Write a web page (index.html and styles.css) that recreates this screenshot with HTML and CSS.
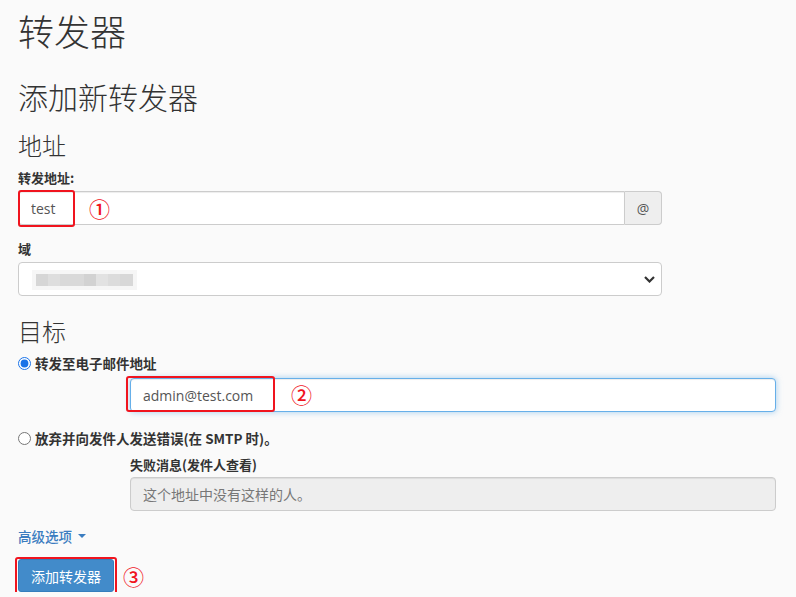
FILE: index.html
```html
<!DOCTYPE html>
<html lang="zh-CN">
<head>
<meta charset="utf-8">
<title>转发器</title>
<link rel="stylesheet" href="styles.css">
</head>
<body>
<main class="page">
  <h1 class="page-title">转发器</h1>
  <h2 class="section-title">添加新转发器</h2>

  <h3 class="group-title">地址</h3>
  <div class="field">
    <label class="field-label" for="fwd">转发地址:</label>
    <div class="input-group">
      <div class="input-wrap">
        <input id="fwd" class="text-input group-input" type="text" value="test">
        <span class="mark mark-1"></span>
        <span class="callout callout-1">①</span>
      </div>
      <span class="addon">@</span>
    </div>
  </div>

  <div class="field">
    <label class="field-label">域</label>
    <div class="select-box">
      <span class="redacted"></span>
      <svg class="chevron" width="11" height="7" viewBox="0 0 11 7"><path d="M1 1 L5.5 5.5 L10 1" fill="none" stroke="#333" stroke-width="2.2"/></svg>
    </div>
  </div>

  <h3 class="group-title target-title">目标</h3>
  <div class="radio-row">
    <input class="radio" type="radio" name="dest" id="r1" checked>
    <label class="radio-label" for="r1">转发至电子邮件地址</label>
  </div>
  <div class="indent">
    <div class="input-wrap">
      <input class="text-input is-focused" type="text" value="admin@test.com">
      <span class="mark mark-2"></span>
      <span class="callout callout-2">②</span>
    </div>
  </div>

  <div class="radio-row second">
    <input class="radio" type="radio" name="dest" id="r2">
    <label class="radio-label" for="r2">放弃并向发件人发送错误(在 SMTP 时)。</label>
  </div>
  <div class="indent">
    <label class="field-label sub-label">失败消息(发件人查看)</label>
    <input class="text-input" type="text" disabled placeholder="这个地址中没有这样的人。">
  </div>

  <a class="adv-link" href="#">高级选项 <span class="caret"></span></a>

  <div class="actions">
    <div class="btn-wrap">
      <button class="btn-primary" type="button">添加转发器</button>
      <span class="mark mark-3"></span>
    </div>
    <span class="callout callout-3">③</span>
  </div>
</main>
</body>
</html>
```

FILE: styles.css
```css
html, body {
  margin: 0;
  padding: 0;
  background: #fafafa;
}

body {
  font-family: "Open Sans", "Noto Sans CJK SC", sans-serif;
  font-size: 14px;
  color: #333;
}

.page {
  padding: 10px 20px 0 18px;
}

.page-title,
.section-title,
.group-title {
  font-family: "Noto Sans CJK SC", "Open Sans", sans-serif;
  font-weight: 300;
  color: #333;
  margin: 0;
}

.page-title {
  font-size: 36px;
  line-height: 40px;
}

.section-title {
  font-size: 30px;
  line-height: 34px;
  margin-top: 29px;
}

.group-title {
  font-size: 24px;
  line-height: 28px;
  margin-top: 18px;
}

.target-title {
  margin-top: 21px;
}

.field {
  width: 644px;
  margin-top: 9px;
}

.field + .field {
  margin-top: 14px;
}

.field-label {
  display: block;
  font-family: "Noto Sans CJK SC", "Open Sans", sans-serif;
  font-weight: 700;
  font-size: 13px;
  line-height: 20px;
  margin-bottom: 3px;
}

.input-group {
  display: flex;
  height: 34px;
}

.input-wrap {
  position: relative;
  flex: 1;
}

.text-input {
  display: block;
  box-sizing: border-box;
  width: 100%;
  height: 34px;
  padding: 6px 12px;
  border: 1px solid #ccc;
  border-radius: 4px;
  background: #fff;
  font-family: "Open Sans", "Noto Sans CJK SC", sans-serif;
  font-size: 14px;
  color: #555;
  box-shadow: inset 0 1px 1px rgba(0, 0, 0, 0.075);
  outline: none;
}

.group-input {
  border-radius: 4px 0 0 4px;
}

.addon {
  box-sizing: border-box;
  width: 37px;
  height: 34px;
  display: flex;
  align-items: center;
  justify-content: center;
  background: #eee;
  border: 1px solid #ccc;
  border-left: 0;
  border-radius: 0 4px 4px 0;
  color: #555;
  font-size: 14px;
}

.select-box {
  box-sizing: border-box;
  height: 34px;
  display: flex;
  align-items: center;
  justify-content: space-between;
  padding: 0 6px 0 17px;
  border: 1px solid #ccc;
  border-radius: 4px;
  background: #fff;
}

.redacted {
  display: block;
  width: 97px;
  height: 12px;
  margin-top: 2px;
  background: linear-gradient(to right,
    #d6d6d6 0 12px, #dedede 12px 24px, #d9d9d9 24px 48px,
    #d2d2d2 48px 60px, #e2e2e2 60px 72px, #dcdcdc 72px 84px, #d8d8d8 84px 97px);
  box-shadow: 0 0 0 4px #f6f6f6;
}

.chevron {
  display: block;
}

.radio-row {
  display: flex;
  align-items: center;
  height: 20px;
  margin-top: 8px;
}

.radio-row.second {
  margin-top: 16px;
}

.radio {
  width: 13px;
  height: 13px;
  margin: 0 4px 0 0;
  accent-color: #1a73e8;
}

.radio-label {
  font-family: "Noto Sans CJK SC", "Open Sans", sans-serif;
  font-weight: 700;
  font-size: 13.5px;
}

.indent {
  margin-left: 112px;
  margin-top: 5px;
}

.sub-label {
  margin-top: 7px;
  margin-bottom: 2px;
}

.is-focused {
  border-color: #66afe9;
  box-shadow: inset 0 1px 1px rgba(0, 0, 0, 0.075), 0 0 6px rgba(102, 175, 233, 0.6);
}

.text-input:disabled {
  background: #eee;
  color: #777;
}

.text-input::placeholder {
  color: #777;
  font-family: "Noto Sans CJK SC", "Open Sans", sans-serif;
}

.adv-link {
  display: inline-flex;
  align-items: center;
  margin-top: 15px;
  line-height: 20px;
  font-family: "Noto Sans CJK SC", "Open Sans", sans-serif;
  font-weight: 500;
  font-size: 13.5px;
  color: #3b7dc0;
  text-decoration: none;
}

.caret {
  display: inline-block;
  width: 0;
  height: 0;
  margin-left: 6px;
  border-left: 4px solid transparent;
  border-right: 4px solid transparent;
  border-top: 4px solid #3b7dc0;
}

.actions {
  display: flex;
  align-items: center;
  margin-top: 13px;
}

.btn-wrap {
  position: relative;
}

.btn-primary {
  display: block;
  box-sizing: border-box;
  height: 33px;
  padding: 0 12px;
  border: 1px solid #357ebd;
  border-radius: 3px;
  background: #428bca;
  color: #fff;
  font-family: "Noto Sans CJK SC", "Open Sans", sans-serif;
  font-size: 14px;
}

.mark {
  position: absolute;
  box-sizing: border-box;
  border: 2.5px solid #f0141e;
  border-radius: 3px;
  pointer-events: none;
}

.mark-1 {
  left: 0;
  top: -1px;
  width: 57px;
  height: 37px;
}

.mark-2 {
  left: -4px;
  top: -2px;
  width: 149px;
  height: 36px;
}

.mark-3 {
  left: -3px;
  top: -2px;
  right: -3px;
  bottom: -3px;
}

.callout {
  font-family: "Noto Sans CJK SC", sans-serif;
  font-size: 21px;
  line-height: 20px;
  font-weight: 500;
  color: #f0141e;
}

.callout-1 {
  position: absolute;
  left: 71px;
  top: 7px;
}

.callout-2 {
  position: absolute;
  left: 161px;
  top: 6px;
}

.callout-3 {
  margin-left: 9px;
}
```
